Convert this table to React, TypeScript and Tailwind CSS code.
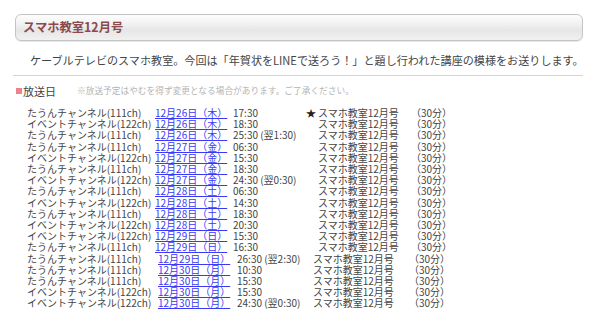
// Broadcast schedule page - スマホ教室12月号

type Row = { ch: string; date: string; time: string; star?: boolean };

const TAUN = 'たうんチャンネル(111ch)';
const EVENT = 'イベントチャンネル(122ch)';

const FIRST: Row[] = [
  { ch: TAUN,  date: '12月26日（木）', time: '17:30', star: true },
  { ch: EVENT, date: '12月26日（木）', time: '18:30' },
  { ch: TAUN,  date: '12月26日（木）', time: '25:30 (翌1:30)' },
  { ch: TAUN,  date: '12月27日（金）', time: '06:30' },
  { ch: EVENT, date: '12月27日（金）', time: '15:30' },
  { ch: TAUN,  date: '12月27日（金）', time: '18:30' },
  { ch: EVENT, date: '12月27日（金）', time: '24:30 (翌0:30)' },
  { ch: TAUN,  date: '12月28日（土）', time: '06:30' },
  { ch: EVENT, date: '12月28日（土）', time: '14:30' },
  { ch: TAUN,  date: '12月28日（土）', time: '18:30' },
  { ch: EVENT, date: '12月28日（土）', time: '20:30' },
  { ch: EVENT, date: '12月29日（日）', time: '15:30' },
  { ch: TAUN,  date: '12月29日（日）', time: '16:30' },
];

const SECOND: Row[] = [
  { ch: TAUN,  date: '12月29日（日）', time: '26:30 (翌2:30)' },
  { ch: TAUN,  date: '12月30日（月）', time: '10:30' },
  { ch: TAUN,  date: '12月30日（月）', time: '15:30' },
  { ch: EVENT, date: '12月30日（月）', time: '15:30' },
  { ch: EVENT, date: '12月30日（月）', time: '24:30 (翌0:30)' },
];

const PROGRAM = 'スマホ教室12月号';

function DateLink({ text }: { text: string }) {
  return (
    <a href="#" className="text-[#3a3af6] underline decoration-[#3a3af6] underline-offset-[1px] whitespace-nowrap">
      {text}
    </a>
  );
}

export default function App() {
  return (
    <div className="w-[600px] h-[321px] overflow-hidden bg-white text-[#444] font-['Noto_Sans_CJK_JP',sans-serif]">
      {/* title box */}
      <div className="ml-[15px] mt-[14px] w-[568px] h-[27px] rounded-[6px] border border-[#c4c4c4] bg-[linear-gradient(to_bottom,#fdfdfd_0%,#f2f2f2_35%,#e6e6e6_60%,#f1f1f1_100%)] flex items-center pl-[7px] shadow-[0_1px_0_#e8e8e8]">
        <h1 className="text-[12.3px] font-bold leading-none text-[#8a4a4e]">{PROGRAM}</h1>
      </div>

      <p className="mt-[12px] pl-[30px] text-[11.1px] leading-[14px] text-[#444] whitespace-nowrap">
        ケーブルテレビのスマホ教室。今回は「年賀状をLINEで送ろう！」と題し行われた講座の模様をお送りします。
      </p>

      <div className="ml-[13px] mt-[8px] w-[570px] border-t border-[#d4d4d4]" />

      {/* broadcast days */}
      <div className="mt-[8px] flex items-center h-[14px] pl-[16px]">
        <span className="w-[6px] h-[6px] bg-[#f0808a] mr-[1px]" />
        <span className="text-[11px] leading-[14px] text-[#444]">放送日</span>
        <span className="ml-[21px] text-[8.7px] leading-[14px] text-[#b4b4b4] whitespace-nowrap">
          ※放送予定はやむを得ず変更となる場合があります。ご了承ください。
        </span>
      </div>

      <div className="mt-[9px] text-[10px] leading-[11.2px] whitespace-nowrap">
        <div className="grid grid-cols-[128px_78px_73px_12px_93px_auto] pl-[27px]">
          {FIRST.map((r, i) => (
            <div key={i} className="contents">
              <span>{r.ch}</span>
              <span><DateLink text={r.date} /></span>
              <span>{r.time}</span>
              <span className="text-[#222]">{r.star ? '★' : ''}</span>
              <span>{PROGRAM}</span>
              <span>（30分）</span>
            </div>
          ))}
        </div>
        <div className="grid grid-cols-[131px_79px_76px_96px_auto] pl-[27px]">
          {SECOND.map((r, i) => (
            <div key={i} className="contents">
              <span>{r.ch}</span>
              <span><DateLink text={r.date} /></span>
              <span>{r.time}</span>
              <span>{PROGRAM}</span>
              <span>（30分）</span>
            </div>
          ))}
        </div>
      </div>
    </div>
  );
}
